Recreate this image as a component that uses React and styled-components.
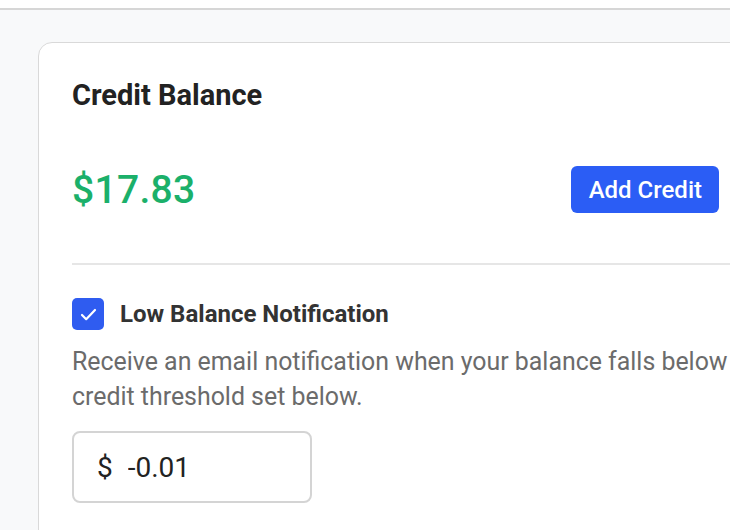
import React from 'react';
import styled, { createGlobalStyle } from 'styled-components';

const GlobalStyle = createGlobalStyle`
  html, body {
    margin: 0;
    padding: 0;
    background: #ffffff;
    overflow: hidden;
  }
  body {
    font-family: Roboto, "Liberation Sans", Arial, sans-serif;
  }
`;

const Page = styled.div`
  width: 730px;
  height: 530px;
  overflow: hidden;
  padding-top: 8px;
  box-sizing: border-box;
`;

const Content = styled.main`
  height: 100%;
  background: #f8f9fa;
  border-top: 2px solid #d6d6d6;
  padding: 32px 0 0 38px;
`;

const Card = styled.section`
  width: 820px;
  min-height: 520px;
  background: #ffffff;
  border: 1.5px solid #d9d9d9;
  border-radius: 14px;
  padding: 35px 33px;
  box-sizing: border-box;
`;

const Title = styled.h2`
  margin: 0;
  font-size: 29px;
  line-height: 34px;
  font-weight: 700;
  color: #222222;
`;

const BalanceRow = styled.div`
  width: 647px;
  margin-top: 54px;
  display: flex;
  align-items: center;
  justify-content: space-between;
`;

const Amount = styled.span`
  font-size: 39px;
  font-weight: 500;
  color: #1bb06a;
  letter-spacing: 0.3px;
`;

const PrimaryButton = styled.button`
  height: 47px;
  padding: 0 17px 0 18px;
  border: none;
  border-radius: 6px;
  background: #2b5df5;
  color: #ffffff;
  font-family: inherit;
  font-size: 24px;
  font-weight: 500;
  cursor: pointer;
`;

const Divider = styled.hr`
  margin: 50px -33px 0 0;
  border: none;
  border-top: 2px solid #e6e6e6;
`;

const CheckRow = styled.label`
  margin-top: 33px;
  display: flex;
  align-items: center;
  gap: 16px;
  cursor: pointer;
`;

const CheckBox = styled.span`
  width: 32px;
  height: 32px;
  border-radius: 5px;
  background: #2f5cf0;
  display: flex;
  align-items: center;
  justify-content: center;
`;

const CheckLabel = styled.span`
  font-size: 24px;
  font-weight: 700;
  color: #333333;
`;

const Hint = styled.p`
  margin: 14px 0 0;
  max-width: 690px;
  font-size: 24.9px;
  line-height: 35px;
  color: #6b6b6b;
`;

const AmountField = styled.div`
  margin-top: 17px;
  width: 240px;
  height: 72px;
  border: 2px solid #d4d4d4;
  border-radius: 8px;
  box-sizing: border-box;
  display: flex;
  align-items: center;
  padding-left: 23px;
  gap: 15px;
  font-size: 28px;
  color: #222222;
`;

const AmountInput = styled.input`
  width: 150px;
  border: none;
  outline: none;
  padding: 0;
  font-family: inherit;
  font-size: 28px;
  color: #222222;
  background: transparent;
`;

export default function App() {
  return (
    <>
      <GlobalStyle />
      <Page>
        <Content>
          <Card>
            <Title>Credit Balance</Title>
            <BalanceRow>
              <Amount>$17.83</Amount>
              <PrimaryButton>Add Credit</PrimaryButton>
            </BalanceRow>
            <Divider />
            <CheckRow>
              <CheckBox>
                <svg width="17" height="13" viewBox="0 0 17 13" fill="none">
                  <path d="M2 7l4.2 4.2L15 2" stroke="#fff" strokeWidth="2.2" strokeLinecap="round" strokeLinejoin="round" />
                </svg>
              </CheckBox>
              <CheckLabel>Low Balance Notification</CheckLabel>
            </CheckRow>
            <Hint>
              Receive an email notification when your balance falls below credit threshold set below.
            </Hint>
            <AmountField>
              <span>$</span>
              <AmountInput defaultValue="-0.01" />
            </AmountField>
          </Card>
        </Content>
      </Page>
    </>
  );
}
